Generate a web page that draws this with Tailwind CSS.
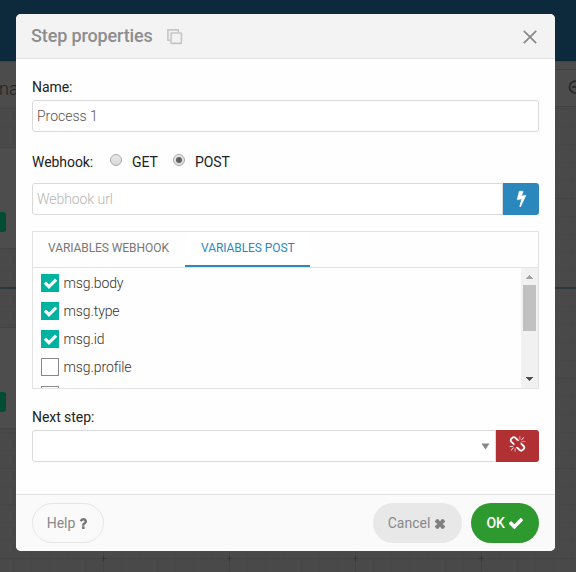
<!DOCTYPE html>
<html lang="en">
<head>
<meta charset="utf-8">
<title>Step properties</title>
<script src="https://cdn.jsdelivr.net/npm/@tailwindcss/browser@4"></script>
</head>
<body class="relative h-[572px] w-[576px] overflow-hidden bg-[#494949] p-[14px_21px_21px_16px] font-['Roboto',sans-serif] text-[14px] text-[#222]">
<!-- Dimmed workspace behind the dialog -->
<svg class="absolute inset-0" width="576" height="572" shape-rendering="crispEdges">
  <defs>
    <pattern id="g" width="18" height="18" x="13" y="0" patternUnits="userSpaceOnUse"><path d="M0 .5H18M.5 0V18" stroke="#474747"/></pattern>
    <pattern id="m" width="126" height="90" x="103" y="18" patternUnits="userSpaceOnUse"><path d="M0 .5H126M.5 0V90" stroke="#444"/></pattern>
  </defs>
  <rect width="576" height="572" fill="#494949"/>
  <rect y="107" width="576" height="465" fill="url(#g)"/>
  <rect y="107" width="576" height="465" fill="url(#m)"/>
  <path d="M101 558.5h5M103.500 556v5M227 558.500h5M229.500 556v5M353 558.500h5M355.500 556v5M479 558.500h5M481.500 556v5" stroke="#363636"/>
  <rect width="576" height="61" fill="#0d293c"/>
  <rect y="61" width="576" height="46" fill="#4c4c4c"/>
  <path d="M0 61.500H576" stroke="#424242"/>
  <path d="M555 69.500H576M555 106.500H576" stroke="#414141"/>
  <rect y="148" width="16" height="100" fill="#4d4d4d"/>
  <rect y="328" width="16" height="100" fill="#4d4d4d"/>
  <path d="M0 147.500H16M0 248.500H16M0 327.500H16M0 428.500H16" stroke="#444"/>
  <path d="M0 288H16M555 288H576" stroke="#2c363d" stroke-width="2"/>
  <g fill="#004d32" shape-rendering="auto"><rect x="-10" y="212" width="16" height="20" rx="3"/><rect x="-10" y="392" width="16" height="20" rx="3"/></g>
  <g fill="none" stroke="#252525" stroke-width="1.700" shape-rendering="auto"><circle cx="575.500" cy="87" r="6"/><path d="M572 87h6"/></g>
  <text x="-1" y="95" font-size="18" font-weight="300" fill="#222">na</text>
</svg>

<main class="relative flex h-[537px] w-[539px] flex-col overflow-hidden rounded-[5px] bg-[#fefefe]">
  <header class="flex h-[45px] shrink-0 items-center border-b border-[#e1e1e1] bg-[#f3f3f3] pl-[15px] pr-[18px] text-[#8d8d8d]">
    <h1 class="w-[136px] whitespace-nowrap text-[18px] leading-[44px] font-medium tracking-[-0.13px]">Step properties</h1>
    <svg class="mt-[2px]" width="16" height="16" fill="none" stroke="#c6c6c6" stroke-width="1.600"><path d="M3.500 11.300H.9V.9h10.400v2.600"/><rect x="4" y="4" width="10.400" height="10.400" rx=".5"/></svg>
    <svg class="ml-auto mt-px" width="14" height="14" fill="none" stroke="#888" stroke-width="1.700"><path d="M.8.8l12.400 12.400M13.200.8L.8 13.200"/></svg>
  </header>

  <section class="flex flex-1 flex-col px-4">
    <label class="mt-[18px] h-[23px] leading-5 tracking-[-0.06px]">Name:</label>
    <div class="h-8 rounded-[3px] border border-[#dadada] bg-white px-1 leading-[30px] font-light text-[#555]">Process 1</div>

    <div class="mt-[20px] flex h-[20px] items-center leading-5 tracking-[-0.06px]">
      <span class="w-[78px]">Webhook:</span>
      <span class="mb-[4px] size-3 rounded-full border border-[#aaa] bg-linear-to-b from-[#e8e8e8] to-[#d8d8d8]"></span>
      <span class="ml-[10px] w-[41px]">GET</span>
      <span class="mb-[4px] flex size-3 items-center justify-center rounded-full border border-[#aaa] bg-linear-to-b from-[#e8e8e8] to-[#ddd]"><i class="size-[6px] rounded-full bg-[#606060]"></i></span>
      <span class="ml-[10px]">POST</span>
    </div>

    <div class="mt-[11px] flex h-8">
      <div class="flex-1 rounded-l-[3px] border border-[#dadada] bg-white px-1 leading-[30px] font-light tracking-[-0.06px] text-[#b5b5b5]">Webhook url</div>
      <button class="flex w-9 items-center justify-center rounded-r-[3px] bg-[#2a88bd]">
        <svg class="mb-[2px]" width="17" height="17" viewBox="0 0 1792 1792" fill="#fff" stroke="#fff" stroke-width="60"><path d="M1333 566q18 20 7 44l-540 1157q-13 25-42 25-4 0-14-2-17-5-25.500-19t-4.500-30l197-808-406 101q-4 1-12 1-18 0-31-11-18-15-13-39l201-825q4-14 16-23t28-9h328q19 0 32 12.500t13 29.500q0 8-5 18l-171 463 396-98q8-2 12-2 19 0 34 15z"/></svg>
      </button>
    </div>

    <div class="mt-4 flex h-[158px] flex-col border border-[#e3e3e3]">
      <nav class="flex h-9 shrink-0 border-b border-[#e3e3e3] text-[12px] leading-[32px] tracking-[-0.07px]">
        <span class="w-[152px] pl-[15px] text-[#777]">VARIABLES WEBHOOK</span>
        <span class="h-[35px] w-[125px] border-b-2 border-[#2f86c3] bg-white pl-4 text-[#2a88c4]">VARIABLES POST</span>
      </nav>
      <div class="flex min-h-0 flex-1">
        <ul class="flex flex-1 flex-col gap-[10px] overflow-hidden pl-2 pt-[6px] font-light tracking-[-0.1px] text-[#333]">
          <li class="flex h-[18px] shrink-0 items-center gap-[4.5px]"><span class="flex size-[18px] items-center justify-center bg-[#00b3a1]"><svg width="15" height="15" viewBox="0 0 1792 1792" fill="#fff"><path d="M1671 566q0 40-28 68l-724 724-136 136q-28 28-68 28t-68-28l-136-136-362-362q-28-28-28-68t28-68l136-136q28-28 68-28t68 28l294 295 656-657q28-28 68-28t68 28l136 136q28 28 28 68z"/></svg></span>msg.body</li>
          <li class="flex h-[18px] shrink-0 items-center gap-[4.5px]"><span class="flex size-[18px] items-center justify-center bg-[#00b3a1]"><svg width="15" height="15" viewBox="0 0 1792 1792" fill="#fff"><path d="M1671 566q0 40-28 68l-724 724-136 136q-28 28-68 28t-68-28l-136-136-362-362q-28-28-28-68t28-68l136-136q28-28 68-28t68 28l294 295 656-657q28-28 68-28t68 28l136 136q28 28 28 68z"/></svg></span>msg.type</li>
          <li class="flex h-[18px] shrink-0 items-center gap-[4.5px]"><span class="flex size-[18px] items-center justify-center bg-[#00b3a1]"><svg width="15" height="15" viewBox="0 0 1792 1792" fill="#fff"><path d="M1671 566q0 40-28 68l-724 724-136 136q-28 28-68 28t-68-28l-136-136-362-362q-28-28-28-68t28-68l136-136q28-28 68-28t68 28l294 295 656-657q28-28 68-28t68 28l136 136q28 28 28 68z"/></svg></span>msg.id</li>
          <li class="flex h-[18px] shrink-0 items-center gap-[4.5px]"><span class="size-[18px] border border-[#888] bg-white"></span>msg.profile</li>
          <li class="h-[18px] shrink-0"><span class="block size-[18px] border border-[#888] bg-white"></span></li>
        </ul>
        <div class="flex w-[17px] flex-col items-center bg-[#f1f1f1]">
          <svg width="17" height="17" fill="#a3a3a3" shape-rendering="crispEdges"><path d="M5 11v-1h1V9h1V8h1V7h1v1h1v1h1v1h1v1z"/></svg>
          <div class="h-[46px] w-[13px] bg-[#c1c1c1]"></div>
          <svg class="mt-auto" width="17" height="17" fill="#505050" shape-rendering="crispEdges"><path d="M5 6v1h1v1h1v1h1v1h1V9h1V8h1V7h1V6z"/></svg>
        </div>
      </div>
    </div>

    <label class="mt-[18px] h-[23px] leading-5 tracking-[-0.06px]">Next step:</label>
    <div class="flex h-8">
      <div class="flex flex-1 items-center justify-end rounded-l-[3px] border border-[#dadada] bg-white pr-[5px]"><svg width="9" height="7" fill="#888"><path d="M.5.5h8L4.500 6.500z"/></svg></div>
      <button class="flex w-[43px] items-center justify-center rounded-r-[3px] bg-[#b13034]">
        <svg class="mb-[3px]" width="17" height="17" viewBox="0 0 1792 1792" fill="#fff"><path d="M503 1271l-256 256q-10 9-23 9-12 0-23-9-9-10-9-23t9-23l256-256q10-9 23-9t23 9q9 10 9 23t-9 23zm169 41v320q0 14-9 23t-23 9-23-9-9-23v-320q0-14 9-23t23-9 23 9 9 23zm-224-224q0 14-9 23t-23 9h-320q-14 0-23-9t-9-23 9-23 23-9h320q14 0 23 9t9 23zm1264 128q0 120-85 203l-147 146q-83 83-203 83-121 0-204-85l-334-335q-21-21-42-56l239-18 273 274q28 28 68 28.500t68-27.500l147-146q28-28 28-67 0-40-28-68l-274-275 18-239q35 21 56 42l336 336q84 86 84 204zm-617-724l-239 18-273-274q-28-28-68-28-39 0-68 27l-147 146q-28 28-28 67 0 40 28 68l274 274-18 240q-35-21-56-42l-336-336q-84-86-84-204 0-120 85-203l147-146q83-83 203-83 121 0 204 85l334 335q21 21 42 56zm633 84q0 14-9 23t-23 9h-320q-14 0-23-9t-9-23 9-23 23-9h320q14 0 23 9t9 23zm-544-544v320q0 14-9 23t-23 9-23-9-9-23v-320q0-14 9-23t23-9 23 9 9 23zm407 151l-256 256q-11 9-23 9t-23-9q-9-10-9-23t9-23l256-256q10-9 23-9t23 9q9 10 9 23t-9 23z"/></svg>
      </button>
    </div>
  </section>

  <footer class="flex h-[57px] shrink-0 items-center border-t border-[#e1e1e1] bg-[#fafafa] px-4 text-[14px] text-[#888]">
    <button class="flex h-10 w-[72px] items-center justify-center gap-1 rounded-full border border-[#e6e6e6] pr-[2px]">Help <svg width="8" height="11" viewBox="370 256 1034 1280" preserveAspectRatio="none" fill="#777"><path d="M1088 1256v240q0 16-12 28t-28 12h-240q-16 0-28-12t-12-28v-240q0-16 12-28t28-12h240q16 0 28 12t12 28zm316-600q0 54-15.500 101t-35 76.500-55 59.500-57.500 43.500-61 35.500q-41 23-68.500 65t-27.500 67q0 17-12 32.500t-28 15.500h-240q-15 0-25.500-18.500t-10.500-37.500v-45q0-83 65-156.500t143-108.500q59-27 84-56t25-76q0-42-46.500-74t-107.500-32q-65 0-108 29-35 25-107 115-13 16-31 16-12 0-25-8l-164-125q-13-10-15.500-25t5.500-28q160-266 464-266 80 0 161 31t146 83 106 127.500 41 158.500z"/></svg></button>
    <button class="ml-auto flex h-10 w-[89px] items-center justify-center gap-[5px] rounded-full bg-[#e8e8e8] pr-[2px]">Cancel <svg class="mt-px" width="10" height="10" fill="#808080"><path d="M0 2L2 0h1l2 2.300L7 0h1l2 2v1L7.600 5 10 7v1L8 10H7L5 7.700 3 10H2L0 8V7l2.400-2L0 3z"/></svg></button>
    <button class="ml-[9px] flex h-10 w-[68px] items-center justify-center gap-1 rounded-full bg-[#2d992f] pr-px font-medium tracking-[-0.2px] text-white">OK <svg width="14" height="11" viewBox="121 334 1550 1188" preserveAspectRatio="none" fill="#fff"><path d="M1671 566q0 40-28 68l-724 724-136 136q-28 28-68 28t-68-28l-136-136-362-362q-28-28-28-68t28-68l136-136q28-28 68-28t68 28l294 295 656-657q28-28 68-28t68 28l136 136q28 28 28 68z"/></svg></button>
  </footer>
</main>
</body>
</html>
